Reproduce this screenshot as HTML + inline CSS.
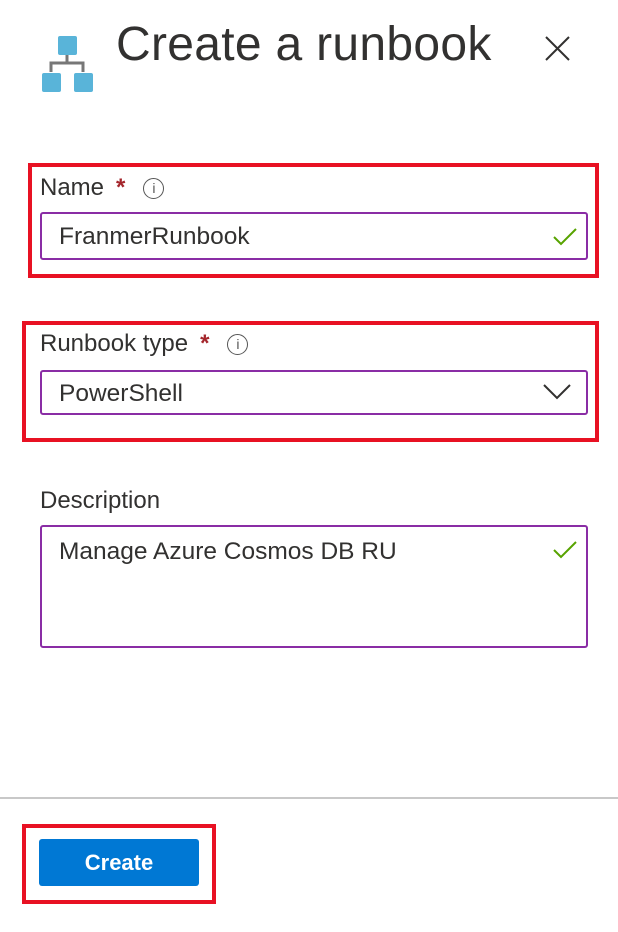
<!DOCTYPE html>
<html><head><style>
body{margin:0;width:618px;height:932px;background:#fff;font-family:"Liberation Sans",sans-serif;color:#323130;position:relative;overflow:hidden}
.a{position:absolute}
.red{position:absolute;border:4px solid #e81123;box-sizing:border-box}
.inp{position:absolute;border:2px solid #8a2da5;border-radius:3px;box-sizing:border-box;font-size:24.5px;color:#323130}
.lbl{position:absolute;font-size:24px;color:#323130}
.star{color:#a4262c;margin-left:12px;font-weight:bold}
.info{display:inline-block;width:19px;height:19px;border:1.5px solid #555;border-radius:50%;font-size:14px;text-align:center;line-height:19px;vertical-align:2px;margin-left:18px;color:#555}
</style></head><body>
<svg class="a" style="left:40px;top:34px" width="56" height="60" viewBox="0 0 56 60">
<path d="M27 20v9M11 38v-9h32v9" stroke="#777" stroke-width="3" fill="none"/>
<rect x="18" y="2" width="19" height="19" rx="2" fill="#59b4d9"/>
<rect x="2" y="39" width="19" height="19" rx="2" fill="#59b4d9"/>
<rect x="34" y="39" width="19" height="19" rx="2" fill="#59b4d9"/>
</svg>
<div class="a" style="left:116px;top:17px;font-size:48px;letter-spacing:0.3px;color:#323130">Create a runbook</div>
<svg class="a" style="left:545px;top:36px" width="25" height="25" viewBox="0 0 25 25"><path d="M1 1L24 24M24 1L1 24" stroke="#323130" stroke-width="2"/></svg>

<div class="red" style="left:28px;top:163px;width:571px;height:115px"></div>
<div class="lbl" style="left:40px;top:174px">Name<span class="star">*</span><span class="info">i</span></div>
<div class="inp" style="left:40px;top:212px;width:548px;height:48px;padding:9px 0 0 17px">FranmerRunbook</div>
<svg class="a" style="left:553px;top:228px" width="24" height="18" viewBox="0 0 24 18"><path d="M1 9l7 7L23 1" stroke="#57a300" stroke-width="2" fill="none"/></svg>

<div class="red" style="left:22px;top:321px;width:577px;height:121px"></div>
<div class="lbl" style="left:40px;top:330px">Runbook type<span class="star">*</span><span class="info">i</span></div>
<div class="inp" style="left:40px;top:370px;width:548px;height:45px;padding:8px 0 0 17px">PowerShell</div>
<svg class="a" style="left:543px;top:384px" width="28" height="16" viewBox="0 0 28 16"><path d="M1 1l13 13L27 1" stroke="#323130" stroke-width="2" fill="none"/></svg>

<div class="lbl" style="left:40px;top:487px">Description</div>
<div class="inp" style="left:40px;top:525px;width:548px;height:123px;padding:11px 0 0 17px">Manage Azure Cosmos DB RU</div>
<svg class="a" style="left:553px;top:541px" width="24" height="18" viewBox="0 0 24 18"><path d="M1 9l7 7L23 1" stroke="#57a300" stroke-width="2" fill="none"/></svg>

<div class="a" style="left:0;top:797px;width:618px;height:2px;background:#c8c8c8"></div>
<div class="red" style="left:22px;top:824px;width:194px;height:80px"></div>
<div class="a" style="left:39px;top:839px;width:160px;height:47px;background:#0078d4;border-radius:3px;color:#fff;font-weight:bold;font-size:22px;text-align:center;line-height:47px">Create</div>
</body></html>
